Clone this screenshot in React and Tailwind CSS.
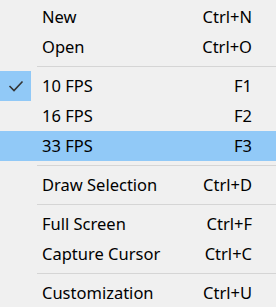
import React from "react";

const items = [
  { label: "New", key: "Ctrl+N" },
  { label: "Open", key: "Ctrl+O" },
  { sep: true },
  { label: "10 FPS", key: "F1", checked: true },
  { label: "16 FPS", key: "F2" },
  { label: "33 FPS", key: "F3", active: true },
  { sep: true },
  { label: "Draw Selection", key: "Ctrl+D" },
  { sep: true },
  { label: "Full Screen", key: "Ctrl+F" },
  { label: "Capture Cursor", key: "Ctrl+C" },
  { sep: true },
  { label: "Customization", key: "Ctrl+U" },
];

const Check = () => (
  <svg width="16" height="12" viewBox="0 0 16 12" fill="none">
    <path d="M1.5 6l4.5 4.5L14.5 1.5" stroke="#333" strokeWidth="1.6" />
  </svg>
);

const MenuRow = ({ item }) => {
  if (item.sep) {
    return (
      <div className="h-[9px] flex items-center pl-[37px]">
        <div className="h-px w-full bg-[#d5d5d5]" />
      </div>
    );
  }
  return (
    <div className={`flex h-[30px] items-center ${item.active ? "bg-[#91c9f7]" : ""}`}>
      <div className={`w-[31px] h-[30px] flex items-center justify-center ${item.checked ? "bg-[#91c9f7]" : ""}`}>
        {item.checked && <Check />}
      </div>
      <span className="ml-[11px] flex-1">{item.label}</span>
      <span className="pr-[24px]">{item.key}</span>
    </div>
  );
};

export default function App() {
  return (
    <div
      className="w-[276px] h-[307px] overflow-hidden bg-[#f0f0f0] pt-[2px] text-[16.5px] text-black"
      style={{ fontFamily: '"Noto Sans", sans-serif' }}
    >
      {items.map((item, i) => (
        <MenuRow key={i} item={item} />
      ))}
    </div>
  );
}
